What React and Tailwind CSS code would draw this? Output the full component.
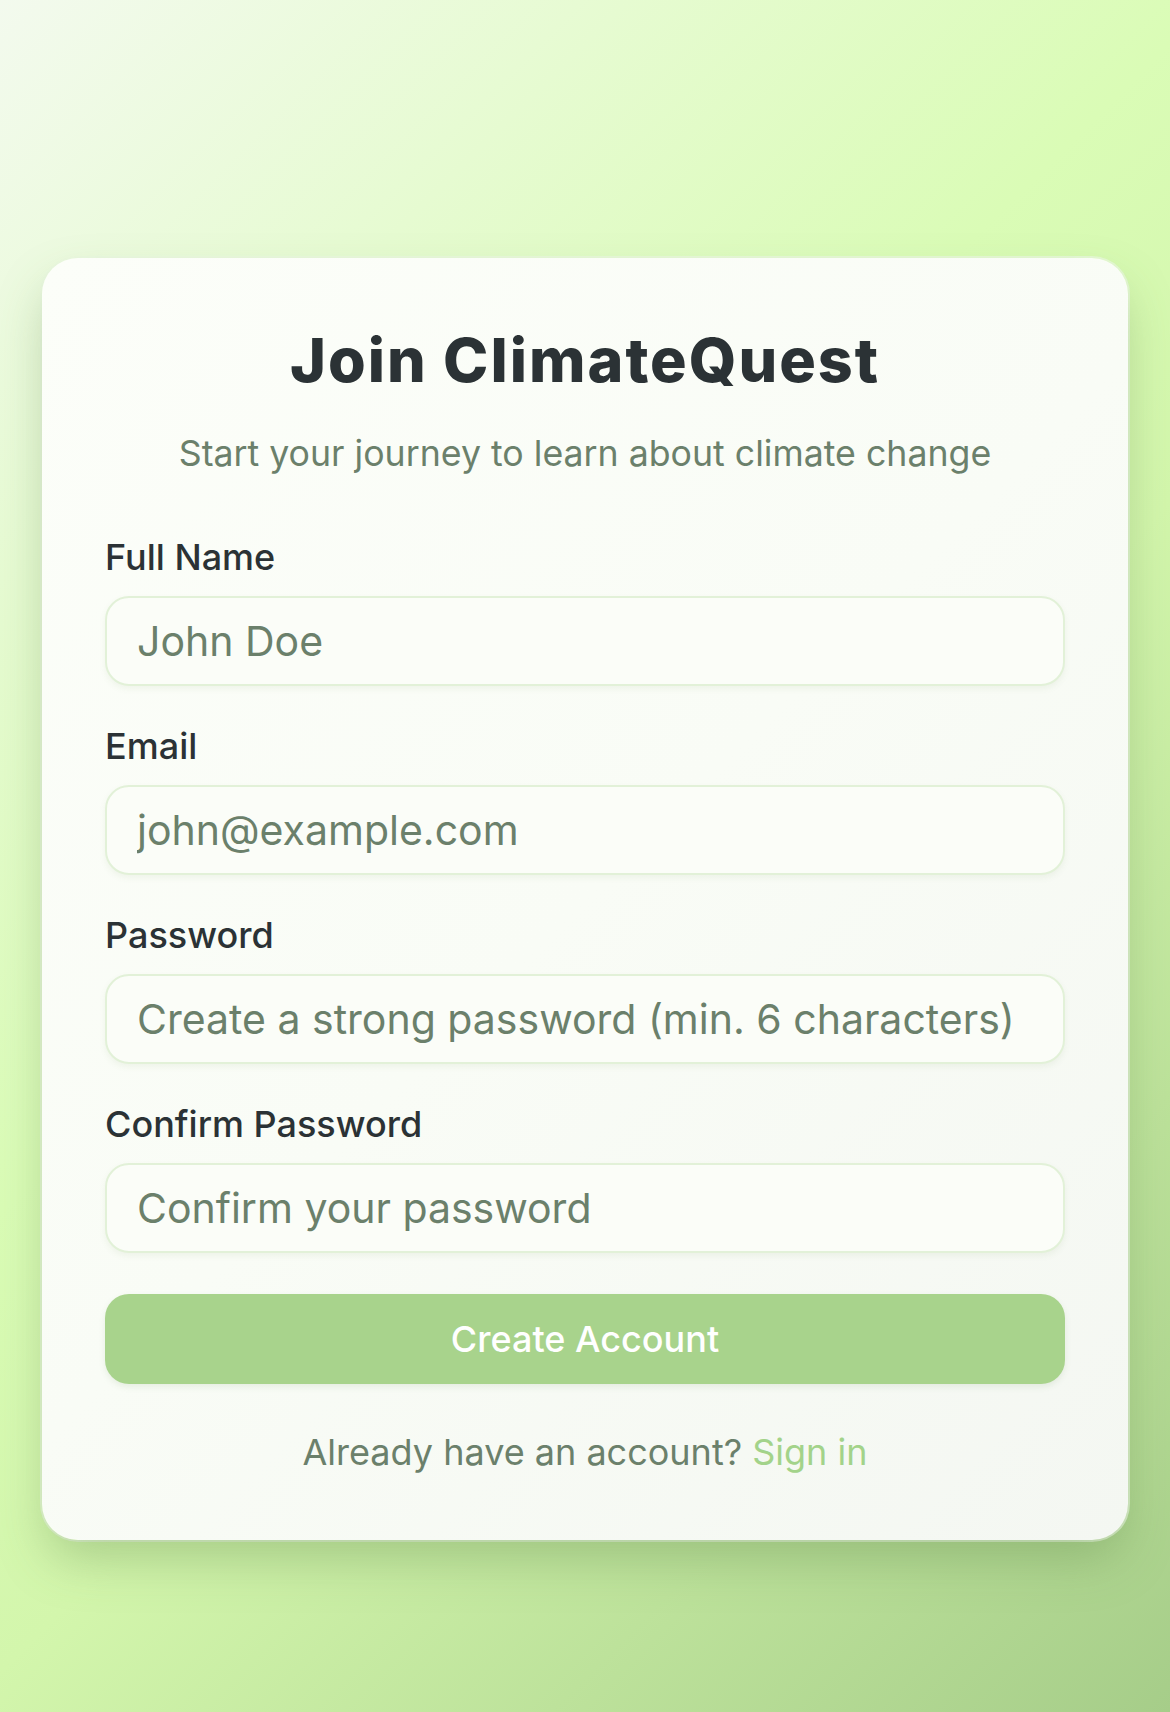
import React from "react";

const fields = [
  { label: "Full Name", placeholder: "John Doe", type: "text" },
  { label: "Email", placeholder: "john@example.com", type: "email" },
  { label: "Password", placeholder: "Create a strong password (min. 6 characters)", type: "password" },
  { label: "Confirm Password", placeholder: "Confirm your password", type: "password" },
];

export default function App() {
  return (
    <div
      className="min-h-[1712px] w-full px-[42px] pt-[258px] pb-[172px] bg-[linear-gradient(135deg,#f3faee_0%,#dafcb6_42%,#d3f6ac_58%,#a6cd89_100%)]"
      style={{ fontFamily: "Inter, 'Noto Sans', sans-serif" }}
    >
      <div className="rounded-[36px] bg-[linear-gradient(135deg,#fcfef9_0%,#f9fcf6_50%,#f4f7f2_100%)] px-[63px] pt-[66px] pb-[67px] shadow-[0_24px_50px_-6px_rgba(90,130,70,0.35),0_0_0_2px_rgba(235,248,225,0.7)]">
        <h1 className="text-center text-[61px] leading-[72px] font-extrabold text-[#2b3235] tracking-[2px]">
          Join ClimateQuest
        </h1>
        <p className="mt-[36px] text-center text-[35.7px] leading-[42px] text-[#6b806b]">
          Start your journey to learn about climate change
        </p>
        <form className="mt-[62px] flex flex-col gap-[39px]" onSubmit={(e) => e.preventDefault()}>
          {fields.map((f) => (
            <div key={f.label} className="flex flex-col">
              <label className="text-[36px] leading-[42px] font-medium text-[#2b3235]">{f.label}</label>
              <input
                type={f.type}
                placeholder={f.placeholder}
                className="mt-[18px] h-[90px] w-full rounded-[24px] border-[2px] border-[#e2f1d8] bg-[#fbfdf8] px-[30px] text-[41px] text-[#2b3235] placeholder:text-[#6b806b] shadow-[0_3px_6px_rgba(100,140,80,0.08)] outline-none"
              />
            </div>
          ))}
        </form>
        <button
          type="button"
          className="mt-[41px] h-[90px] w-full rounded-[24px] bg-[#a8d38c] text-[36px] font-medium text-white shadow-[0_3px_6px_rgba(100,140,80,0.12)]"
        >
          Create Account
        </button>
        <p className="mt-[47px] text-center text-[36px] leading-[42px] text-[#6b806b]">
          Already have an account? <span className="text-[#a3d38a]">Sign in</span>
        </p>
      </div>
    </div>
  );
}
